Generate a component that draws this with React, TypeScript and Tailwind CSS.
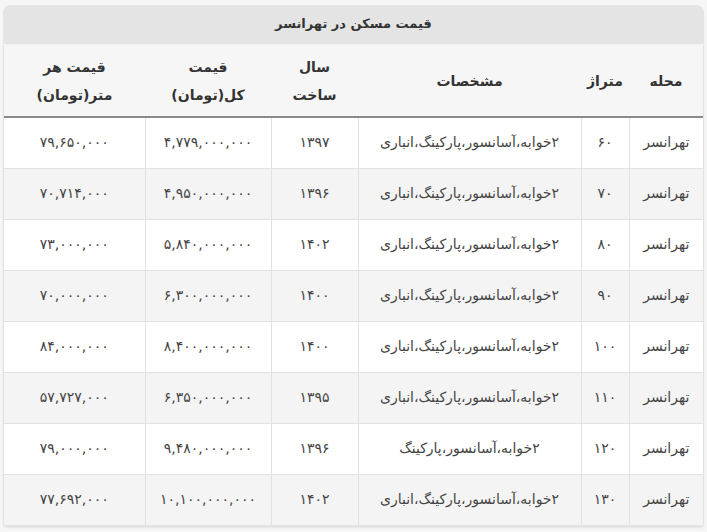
import React from "react";

const rows = [
  { area: "۶۰", spec: "۲خوابه،آسانسور،پارکینگ،انباری", year: "۱۳۹۷", total: "۴,۷۷۹,۰۰۰,۰۰۰", perMeter: "۷۹,۶۵۰,۰۰۰" },
  { area: "۷۰", spec: "۲خوابه،آسانسور،پارکینگ،انباری", year: "۱۳۹۶", total: "۴,۹۵۰,۰۰۰,۰۰۰", perMeter: "۷۰,۷۱۴,۰۰۰" },
  { area: "۸۰", spec: "۲خوابه،آسانسور،پارکینگ،انباری", year: "۱۴۰۲", total: "۵,۸۴۰,۰۰۰,۰۰۰", perMeter: "۷۳,۰۰۰,۰۰۰" },
  { area: "۹۰", spec: "۲خوابه،آسانسور،پارکینگ،انباری", year: "۱۴۰۰", total: "۶,۳۰۰,۰۰۰,۰۰۰", perMeter: "۷۰,۰۰۰,۰۰۰" },
  { area: "۱۰۰", spec: "۲خوابه،آسانسور،پارکینگ،انباری", year: "۱۴۰۰", total: "۸,۴۰۰,۰۰۰,۰۰۰", perMeter: "۸۴,۰۰۰,۰۰۰" },
  { area: "۱۱۰", spec: "۲خوابه،آسانسور،پارکینگ،انباری", year: "۱۳۹۵", total: "۶,۳۵۰,۰۰۰,۰۰۰", perMeter: "۵۷,۷۲۷,۰۰۰" },
  { area: "۱۲۰", spec: "۲خوابه،آسانسور،پارکینگ", year: "۱۳۹۶", total: "۹,۴۸۰,۰۰۰,۰۰۰", perMeter: "۷۹,۰۰۰,۰۰۰" },
  { area: "۱۳۰", spec: "۲خوابه،آسانسور،پارکینگ،انباری", year: "۱۴۰۲", total: "۱۰,۱۰۰,۰۰۰,۰۰۰", perMeter: "۷۷,۶۹۲,۰۰۰" },
];

const font = { fontFamily: "'DejaVu Sans', sans-serif" };

export default function App() {
  return (
    <div dir="rtl" className="w-[707px] h-[532px] bg-[#f6f6f6] px-[3px] pt-[5px] text-[#333]" style={font}>
      <div className="h-[38px] flex items-center justify-center rounded-t-lg bg-[#e4e4e4] shadow-[0_1px_1px_rgba(0,0,0,0.08)] text-[13px] font-bold text-[#333]">
        قیمت مسکن در تهرانسر
      </div>
      <div className="mt-[2px] border-x border-b border-[#e2e2e2] rounded-b-sm shadow-[0_1px_2px_rgba(0,0,0,0.08)] overflow-hidden">
        <table className="w-full table-fixed border-collapse text-[14px]">
          <colgroup>
            <col className="w-[74px]" />
            <col className="w-[48px]" />
            <col className="w-[223px]" />
            <col className="w-[87px]" />
            <col className="w-[126px]" />
            <col />
          </colgroup>
          <thead>
            <tr className="h-[72px] bg-[#f6f6f6] border-b-2 border-[#8a8a8a] text-[14px] font-bold leading-[28px] text-[#333]">
              <th className="font-bold">محله</th>
              <th className="font-bold">متراژ</th>
              <th className="font-bold">مشخصات</th>
              <th className="font-bold">سال<br />ساخت</th>
              <th className="font-bold">قیمت<br />کل(تومان)</th>
              <th className="font-bold">قیمت هر<br />متر(تومان)</th>
            </tr>
          </thead>
          <tbody>
            {rows.map((r, i) => (
              <tr key={i} className={`h-[51px] text-[#444] ${i % 2 === 0 ? "bg-white" : "bg-[#f4f4f4]"}`}>
                <td className="border border-[#e2e2e2] border-r-0 text-center">تهرانسر</td>
                <td className="border border-[#e2e2e2] text-center">{r.area}</td>
                <td className="border border-[#e2e2e2] text-center">{r.spec}</td>
                <td className="border border-[#e2e2e2] text-center">{r.year}</td>
                <td className="border border-[#e2e2e2] text-center">{r.total}</td>
                <td className="border border-[#e2e2e2] border-l-0 text-center">{r.perMeter}</td>
              </tr>
            ))}
          </tbody>
        </table>
      </div>
    </div>
  );
}
